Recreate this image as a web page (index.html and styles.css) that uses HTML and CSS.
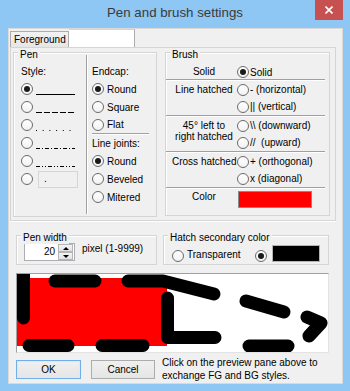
FILE: index.html
```html
<!DOCTYPE html>
<html>
<head>
<meta charset="utf-8">
<title>Pen and brush settings</title>
<link rel="stylesheet" href="styles.css">
</head>
<body>
<div class="frame">
  <div class="titlebar">
    <div class="title">Pen and brush settings</div>
    <div class="close"><svg width="8" height="8" viewBox="0 0 8 8"><path d="M0.5 0.5 L7.5 7.5 M7.5 0.5 L0.5 7.5" stroke="#fff" stroke-width="1.6"/></svg></div>
  </div>
  <div class="client">
    <div class="tabstrip">
      <div class="tab">Foreground</div>
      <div class="tab2"></div>
    </div>
    <div class="tabpage">
      <div class="group pen">
        <span class="legend">Pen</span>
        <div class="pcol pleft">
          <div class="row">Style:</div>
          <div class="row"><span class="radio on"></span><svg class="ls" width="39" height="18"><line x1="0" y1="14.5" x2="39" y2="14.5" stroke="#000"/></svg></div>
          <div class="row"><span class="radio"></span><svg class="ls" width="39" height="18"><line x1="0" y1="14.5" x2="39" y2="14.5" stroke="#000" stroke-dasharray="6 2"/></svg></div>
          <div class="row"><span class="radio"></span><svg class="ls" width="39" height="18"><line x1="0" y1="14.5" x2="39" y2="14.5" stroke="#000" stroke-dasharray="1 5.7"/></svg></div>
          <div class="row"><span class="radio"></span><svg class="ls" width="39" height="18"><line x1="0" y1="14.5" x2="39" y2="14.5" stroke="#000" stroke-dasharray="4 2 1 2"/></svg></div>
          <div class="row"><span class="radio"></span><svg class="ls" width="39" height="18"><line x1="0" y1="14.5" x2="39" y2="14.5" stroke="#000" stroke-dasharray="4 2 1 2 1 2"/></svg></div>
          <div class="row"><span class="radio"></span><span class="custom">.</span></div>
        </div>
        <div class="vsep"></div>
        <div class="pcol pright">
          <div class="row">Endcap:</div>
          <div class="row"><span class="radio on"></span>Round</div>
          <div class="row"><span class="radio"></span>Square</div>
          <div class="row short"><span class="radio"></span>Flat</div>
          <div class="hsep"></div>
          <div class="row short">Line joints:</div>
          <div class="row"><span class="radio on"></span>Round</div>
          <div class="row"><span class="radio"></span>Beveled</div>
          <div class="row"><span class="radio"></span>Mitered</div>
        </div>
      </div>
      <div class="group brush">
        <span class="legend">Brush</span>
        <div class="bgroup first">
          <div class="blabel">Solid</div>
          <div class="bopts"><div class="opt"><span class="radio on"></span>Solid</div></div>
        </div>
        <div class="bsep"></div>
        <div class="bgroup">
          <div class="blabel">Line hatched</div>
          <div class="bopts">
            <div class="opt"><span class="radio"></span>- (horizontal)</div>
            <div class="opt"><span class="radio"></span>|| (vertical)</div>
          </div>
        </div>
        <div class="bsep"></div>
        <div class="bgroup">
          <div class="blabel two">45° left to<br>right hatched</div>
          <div class="bopts">
            <div class="opt"><span class="radio"></span>\\ (downward)</div>
            <div class="opt"><span class="radio"></span>//&nbsp; (upward)</div>
          </div>
        </div>
        <div class="bsep"></div>
        <div class="bgroup">
          <div class="blabel">Cross hatched</div>
          <div class="bopts">
            <div class="opt"><span class="radio"></span>+ (orthogonal)</div>
            <div class="opt"><span class="radio"></span>x (diagonal)</div>
          </div>
        </div>
        <div class="bsep"></div>
        <div class="bgroup color">
          <div class="blabel">Color</div>
          <div class="swatch red"></div>
        </div>
      </div>
    </div>

    <div class="lower">
      <div class="group penwidth">
        <span class="legend">Pen width</span>
        <div class="spin">
          <div class="spin-val">20</div>
          <div class="spin-btns"><div class="sb"><span class="up"></span></div><div class="sb"><span class="down"></span></div></div>
        </div>
        <div class="unit">pixel (1-9999)</div>
      </div>
      <div class="group hatch">
        <span class="legend">Hatch secondary color</span>
        <span class="radio"></span><span class="hlabel">Transparent</span>
        <span class="radio on second"></span><div class="swatch black"></div>
      </div>
    </div>

    <div class="preview">
      <svg width="311" height="78" viewBox="17 274 311 78">
        <rect x="17" y="278" width="150" height="68" fill="#ff0000"/>
        <g fill="none" stroke="#000" stroke-width="13" stroke-linecap="round" stroke-linejoin="round">
          <path d="M23.5 262 L23.5 318"/>
          <path d="M55 281 L95 281"/>
          <path d="M128 281 L163 281 L214 294"/>
          <path d="M246 301 L284 312"/>
          <path d="M307 317 L321 323 L309 336"/>
          <path d="M167.5 298 L167.5 337.5 L215 337.5"/>
          <path d="M29 345.5 L68 345.5"/>
          <path d="M102 345.5 L143 345.5"/>
          <path d="M249 346 L288 346"/>
        </g>
      </svg>
    </div>

    <div class="actions">
      <div class="btn default">OK</div>
      <div class="btn">Cancel</div>
      <div class="help">Click on the preview pane above to<br>exchange FG and BG styles.</div>
    </div>
  </div>
</div>
</body>
</html>
```

FILE: styles.css
```css
* { box-sizing: border-box; }
html, body { margin: 0; padding: 0; }
body {
  width: 350px;
  height: 391px;
  overflow: hidden;
  background: #8ec6f4;
  font-family: "Liberation Sans", Arial, sans-serif;
  font-size: 10px;
  color: #000;
}
.frame { display: flex; flex-direction: column; height: 391px; }

.titlebar {
  height: 28px;
  position: relative;
  display: flex;
  justify-content: center;
  padding-top: 5px;
}
.title { font-size: 13.3px; line-height: 15px; color: #3a3a3a; }
.close {
  position: absolute;
  top: 0;
  right: 7px;
  width: 28px;
  height: 20px;
  background: #c75050;
  display: flex;
  align-items: center;
  justify-content: center;
}
.close svg { display: block; }

.client {
  margin: 0 7px 0 8px;
  height: 356px;
  background: #f0f0f0;
  border: 1px solid #dadada;
  display: flex;
  flex-direction: column;
}

/* tabs */
.tabstrip { height: 18px; display: flex; padding-left: 1px; }
.tab {
  margin-top: 2px;
  width: 59px;
  height: 16px;
  border: 1px solid #acacac;
  border-bottom: none;
  background: linear-gradient(#f2f2f2, #e6e6e6);
  padding-left: 3px;
  line-height: 15px;
}
.tab2 {
  width: 66px;
  height: 18px;
  background: #fff;
  border-right: 1px solid #acacac;
  border-top: 1px solid #d4d4d4;
}
.tabpage {
  margin-left: 1px;
  width: 326px;
  height: 174px;
  border: 1px solid #d5d5d5;
  box-shadow: 0 1px 0 #fff;
  display: flex;
  align-items: flex-start;
  padding: 4px 0 0 2px;
}

/* group boxes */
.group {
  position: relative;
  border: 1px solid #d5d5d5;
  box-shadow: inset 1px 1px 0 #fff;
}
.legend {
  position: absolute;
  top: -4px;
  left: 4px;
  padding: 0 2px;
  background: #f0f0f0;
  line-height: 12px;
  white-space: nowrap;
}

/* radio */
.radio {
  position: relative;
  flex: none;
  width: 12px;
  height: 12px;
  border-radius: 50%;
  border: 1px solid #6a6a6a;
  background: linear-gradient(#ffffff, #f2f2f2);
  margin-right: 3px;
}
.radio.on::after {
  content: "";
  position: absolute;
  left: 2px;
  top: 2px;
  width: 6px;
  height: 6px;
  border-radius: 50%;
  background: #1a1a1a;
}

/* pen group */
.pen { width: 144px; height: 165px; display: flex; padding: 2px 0; }
.pcol { display: flex; flex-direction: column; }
.pleft { width: 72px; padding: 7px 0 0 7px; }
.pright { flex: 1; padding: 7px 0 0 4px; }
.vsep { width: 2px; border-left: 1px solid #a0a0a0; border-right: 1px solid #fff; }
.row { height: 18px; display: flex; align-items: center; white-space: nowrap; }
.row.short { height: 17px; }
.hsep {
  height: 2px;
  margin-right: 7px;
  border-top: 1px solid #a0a0a0;
  border-bottom: 1px solid #fff;
}
.ls { display: block; flex: none; }
.custom {
  margin-left: 2px;
  width: 40px;
  height: 17px;
  border: 1px solid #d5d5d5;
  background: #f0f0f0;
  padding-left: 5px;
  line-height: 14px;
}

/* brush group */
.brush {
  width: 165px;
  height: 164px;
  margin-left: 8px;
  padding: 12px 4px 0 0;
  display: flex;
  flex-direction: column;
}
.bgroup { display: flex; }
.blabel {
  width: 70px;
  padding-left: 6px;
  text-align: center;
  line-height: 17px;
  white-space: nowrap;
}
.blabel.two { line-height: 11px; padding-top: 3px; }
.bopts { flex: 1; display: flex; flex-direction: column; }
.opt { height: 17px; display: flex; align-items: center; padding-left: 1px; white-space: pre; }
.opt .radio { margin-right: 1px; }
.first .blabel { line-height: 14px; }
.first .opt { height: 14px; }
.bsep { height: 2px; border-top: 1px solid #a0a0a0; border-bottom: 1px solid #fff; }
.color .blabel { line-height: 16px; }
.swatch { border: 1px solid #8a8a8a; }
.swatch.red { margin: 2px 0 0 2px; width: 74px; height: 17px; background: #ff0000; }

/* lower row */
.lower { display: flex; gap: 6px; padding-left: 7px; margin-top: 14px; }
.penwidth {
  width: 141px;
  height: 30px;
  display: flex;
  align-items: flex-start;
  padding: 7px 0 0 7px;
}
.spin {
  display: flex;
  width: 51px;
  height: 18px;
  border: 1px solid #abadb3;
  background: #fff;
}
.spin-val { flex: 1; text-align: right; padding-right: 3px; line-height: 16px; }
.spin-btns { width: 16px; display: flex; flex-direction: column; padding: 0 1px 0 0; }
.sb {
  flex: 1;
  border: 1px solid #b5b5b5;
  background: linear-gradient(#f4f4f4, #e2e2e2);
  display: flex;
  align-items: center;
  justify-content: center;
}
.up { width: 0; height: 0; border-left: 3px solid transparent; border-right: 3px solid transparent; border-bottom: 3px solid #000; }
.down { width: 0; height: 0; border-left: 3px solid transparent; border-right: 3px solid transparent; border-top: 3px solid #000; }
.unit { margin-left: 7px; line-height: 12px; white-space: nowrap; }

.hatch {
  width: 166px;
  height: 30px;
  display: flex;
  align-items: flex-end;
  padding: 0 0 2px 8px;
}
.hlabel { line-height: 14px; }
.radio.second { margin-left: 14px; margin-right: 5px; }
.swatch.black { width: 48px; height: 17px; background: #000; border-color: #b4b4b4; }

/* preview */
.preview {
  margin: 8px 0 0 7px;
  width: 313px;
  height: 80px;
  background: #fff;
  border: 1px solid;
  border-color: #a0a0a0 #e3e3e3 #e3e3e3 #a0a0a0;
}
.preview svg { display: block; }

/* buttons */
.actions { display: flex; align-items: flex-start; margin-top: 7px; padding-left: 7px; }
.btn {
  width: 64px;
  height: 19px;
  border: 1px solid #acacac;
  background: linear-gradient(#f0f0f0, #e5e5e5);
  text-align: center;
  line-height: 17px;
}
.btn.default { width: 65px; border-color: #6fb0ea; box-shadow: inset 0 0 0 1px #d8ebfb; }
.btn + .btn { margin-left: 10px; }
.help { margin: -4px 0 0 7px; line-height: 13px; white-space: nowrap; }
```
